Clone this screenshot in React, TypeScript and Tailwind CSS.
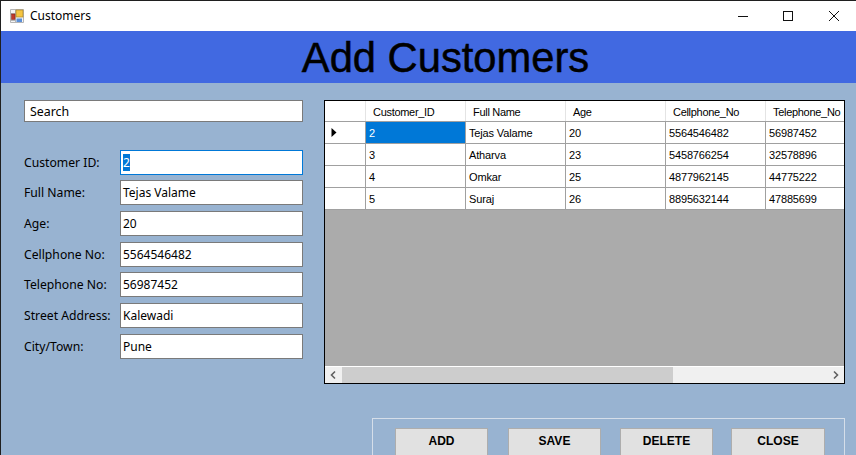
import React from "react";

const fields = [
  { label: "Customer ID:", value: "2" },
  { label: "Full Name:", value: "Tejas Valame" },
  { label: "Age:", value: "20" },
  { label: "Cellphone No:", value: "5564546482" },
  { label: "Telephone No:", value: "56987452" },
  { label: "Street Address:", value: "Kalewadi" },
  { label: "City/Town:", value: "Pune" },
];

const fieldClasses = ["h-[25px]", "h-[25px] mt-[5px]", "h-[25px] mt-[6px]", "h-[25px] mt-[6px]", "h-[25px] mt-[5px]", "h-[25px] mt-[6px]", "h-[25px] mt-[6px]"];

const columns = ["Customer_ID", "Full Name", "Age", "Cellphone_No", "Telephone_No"];

const rows = [
  ["2", "Tejas Valame", "20", "5564546482", "56987452"],
  ["3", "Atharva", "23", "5458766254", "32578896"],
  ["4", "Omkar", "25", "4877962145", "44775222"],
  ["5", "Suraj", "26", "8895632144", "47885699"],
];

const buttons = [
  { label: "ADD", cls: "ml-[22px] w-[93px]" },
  { label: "SAVE", cls: "ml-[20px] w-[93px]" },
  { label: "DELETE", cls: "ml-[19px] w-[93px]" },
  { label: "CLOSE", cls: "ml-[18px] w-[94px]" },
];

export default function App() {
  return (
    <div className="w-[856px] h-[455px] overflow-hidden flex flex-col bg-[#98b3d1] border-t border-l border-[#1f1f1f] font-['Noto_Sans',sans-serif] text-[#000]">
      {/* title bar */}
      <div className="h-[30px] shrink-0 bg-white flex items-center">
        <svg width="14" height="14" viewBox="0 0 14 14" className="ml-[9px]">
          <path d="M0.5 0.5h13v13h-13zM0.5 4.5h5M5.5 0.5v13M0.5 11.5h5" fill="#f4f4f4" stroke="#b5b5b5" />
          <rect x="6" y="1" width="7" height="7" fill="#f5c542" stroke="#a8842a" strokeWidth="0.7" />
          <rect x="1.5" y="5" width="3.5" height="5.5" fill="#c0392b" stroke="#7c1f16" strokeWidth="0.5" />
          <rect x="6.5" y="9.5" width="5.5" height="3.5" fill="#5b8fd8" />
        </svg>
        <span className="ml-[6px] text-[12px] leading-none">Customers</span>
        <div className="ml-auto flex items-center">
          <svg width="12" height="12" viewBox="0 0 12 12" className="mr-[33px]">
            <path d="M1 6.5h10" stroke="#111" strokeWidth="1" />
          </svg>
          <svg width="12" height="12" viewBox="0 0 12 12" className="mr-[34px]">
            <rect x="1.5" y="1.5" width="9" height="9" fill="none" stroke="#111" strokeWidth="1" />
          </svg>
          <svg width="12" height="12" viewBox="0 0 12 12" className="mr-[16px]">
            <path d="M1 1l10 10M11 1L1 11" stroke="#111" strokeWidth="1" />
          </svg>
        </div>
      </div>

      {/* heading */}
      <div className="h-[52px] shrink-0 bg-[#4169e1] flex items-center justify-center pl-[34px] pt-[1px]">
        <h1 className="font-['Liberation_Sans',sans-serif] text-[41.7px] leading-none font-normal text-black [-webkit-text-stroke:0.5px_#000]">Add Customers</h1>
      </div>

      <div className="flex items-start pt-[17px]">
        {/* form column */}
        <div className="w-[279px] ml-[23px] shrink-0">
          <div className="h-[22px] bg-white border border-[#7a7a7a] px-[5px] pt-[2px] flex items-center text-[12.4px] leading-none">Search</div>
          <div className="mt-[28px] flex flex-col">
            {fields.map((f, i) => (
              <div key={f.label} className={`flex items-center ${fieldClasses[i]}`}>
                <span className="w-[96px] shrink-0 pt-[2px] text-[12.2px] leading-none whitespace-nowrap">{f.label}</span>
                <div className={`flex-1 h-full bg-white flex items-center pl-[2px] text-[12px] leading-none ${i === 0 ? "border border-[#0078d7]" : "border border-[#7a7a7a] pt-[1px]"}`}>
                  {i === 0 ? <span className="bg-[#0078d7] text-white w-[7px] h-[17px] flex items-center">2</span> : f.value}
                </div>
              </div>
            ))}
          </div>
        </div>

        {/* data grid */}
        <div className="w-[521px] h-[284px] ml-[21px] shrink-0 border border-black bg-[#ababab] flex flex-col font-['Liberation_Sans',sans-serif] text-[11px] tracking-[-0.15px]">
          <div className="h-[21px] shrink-0 bg-white flex overflow-hidden border-b border-[#a0a0a0]">
            <div className="w-[41px] shrink-0 border-r border-[#e4e4e4]" />
            {columns.map((c) => (
              <div key={c} className="w-[100px] shrink-0 border-r border-[#e4e4e4] pl-[7px] pt-[2px] flex items-center whitespace-nowrap leading-none tracking-[-0.3px]">{c}</div>
            ))}
          </div>
          {rows.map((r, ri) => (
            <div key={r[0]} className="h-[22px] shrink-0 bg-white flex overflow-hidden border-b border-[#a0a0a0]">
              <div className="w-[41px] shrink-0 border-r border-[#a0a0a0] flex items-center pl-[6px]">
                {ri === 0 && (
                  <svg width="6" height="9" viewBox="0 0 6 9">
                    <path d="M0.5 0v9l5-4.5z" fill="#000" />
                  </svg>
                )}
              </div>
              {r.map((v, ci) => (
                <div key={ci} className={`w-[100px] shrink-0 border-r border-[#a0a0a0] pl-[3px] pt-[2px] flex items-center leading-none ${ri === 0 && ci === 0 ? "bg-[#0078d7] text-white" : ""}`}>{v}</div>
              ))}
            </div>
          ))}
          <div className="flex-1" />
          {/* scrollbar */}
          <div className="h-[17px] shrink-0 bg-[#f0f0f0] border-t border-white flex items-center">
            <svg width="17" height="16" viewBox="0 0 17 16" className="shrink-0">
              <path d="M10 4.5L6.5 8l3.5 3.5" fill="none" stroke="#606060" strokeWidth="1.6" />
            </svg>
            <div className="w-[331px] h-full bg-[#cdcdcd]" />
            <svg width="17" height="16" viewBox="0 0 17 16" className="ml-auto shrink-0">
              <path d="M7 4.5L10.5 8 7 11.5" fill="none" stroke="#606060" strokeWidth="1.6" />
            </svg>
          </div>
        </div>
      </div>

      {/* button group */}
      <div className="mt-[34px] ml-[371px] w-[473px] h-[60px] shrink-0 border border-[#d5dee9] flex items-start pt-[9px] font-['Liberation_Sans',sans-serif]">
        {buttons.map((b) => (
          <div key={b.label} className={`h-[40px] shrink-0 bg-[#e1e1e1] border border-[#adadad] flex items-center justify-center text-[12px] font-bold leading-none pb-[14px] ${b.cls}`}>{b.label}</div>
        ))}
      </div>
    </div>
  );
}
